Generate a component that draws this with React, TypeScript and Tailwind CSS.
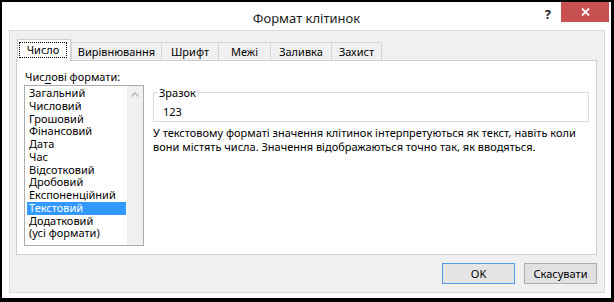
import React from "react";

const items = [
  "Загальний",
  "Числовий",
  "Грошовий",
  "Фінансовий",
  "Дата",
  "Час",
  "Відсотковий",
  "Дробовий",
  "Експоненційний",
  "Текстовий",
  "Додатковий",
  "(усі формати)",
];

const tabs = [
  { label: "Вирівнювання", w: "w-[91px]" },
  { label: "Шрифт", w: "w-[58px]" },
  { label: "Межі", w: "w-[53px]" },
  { label: "Заливка", w: "w-[62px]" },
  { label: "Захист", w: "w-[51px]" },
];

export default function App() {
  return (
    <div className="w-[614px] h-[302px] bg-black pt-[2px] pl-[2px] pr-[3px] pb-[4px] text-[11px] text-black font-['Noto_Sans',sans-serif]">
      <div className="h-full bg-white flex flex-col">
        {/* Title bar */}
        <div className="h-[28px] grid grid-cols-[1fr_auto_1fr] items-start shrink-0">
          <div />
          <div className="pt-[6px] text-[13px] leading-[20px] text-[#1a1a1a]">Формат клітинок</div>
          <div className="flex justify-end items-start">
            <div className="mt-[4px] mr-[10px] text-[13px] font-bold leading-[16px] text-[#222]">?</div>
            <div className="w-[48px] h-[20px] bg-[#c75050] flex items-center justify-center mr-[2px]">
              <svg width="9" height="8" viewBox="0 0 9 8">
                <path d="M1 0.5 L8 7.5 M8 0.5 L1 7.5" stroke="white" strokeWidth="1.8" />
              </svg>
            </div>
          </div>
        </div>

        {/* Client area */}
        <div className="flex-1 ml-[7px] mr-[6px] mb-[5px] border border-[#dadada] bg-[#f0f0f0] pt-[8px] pl-[6px] pr-[7px] flex flex-col">
          {/* Tabs */}
          <div className="flex items-end h-[21px] relative z-10">
            <div className="ml-[1px] w-[54px] h-[22px] -mb-px bg-white border border-b-0 border-[#cfcfcf] pt-[2px] pl-[1px] relative z-10">
              <span className="block w-[48px] h-[16px] border border-dotted border-black leading-[14px] text-center">
                Число
              </span>
            </div>
            {tabs.map((t, i) => (
              <div
                key={t.label}
                className={`${t.w} h-[18px] ${i === 0 ? "ml-0" : "-ml-px"} bg-[#f0f0f0] border border-b-0 border-[#d5d5d5] flex items-center justify-center leading-[15px]`}
              >
                {t.label}
              </div>
            ))}
          </div>

          {/* Panel */}
          <div className="h-[195px] bg-white border border-[#cfcfcf] flex shrink-0">
            {/* Left column */}
            <div className="pl-[7px] pt-[8px] flex flex-col shrink-0">
              <div className="leading-[15px] pl-[1px]">
                Чис<span className="underline underline-offset-2">л</span>ові формати:
              </div>
              <div className="mt-[1px] w-[120px] h-[161px] border border-[#acacac] flex">
                <div className="flex-1 pt-[1px] pl-[2px] pr-[1px]">
                  {items.map((it) => (
                    <div
                      key={it}
                      className={`h-[12.75px] leading-[12.75px] pl-[2px] whitespace-nowrap ${
                        it === "Текстовий" ? "bg-[#3399ff] text-white" : ""
                      }`}
                    >
                      {it}
                    </div>
                  ))}
                </div>
                <div className="w-[16px] bg-[#f0f0f0] flex justify-center pt-[6px]">
                  <svg width="8" height="5" viewBox="0 0 8 5">
                    <path d="M0.5 4.5 L4 1 L7.5 4.5" stroke="#b5b5b5" strokeWidth="1.3" fill="none" />
                  </svg>
                </div>
              </div>
            </div>

            {/* Right column */}
            <div className="ml-[9px] mr-[7px] flex-1 min-w-0 pt-[24px]">
              <fieldset className="border border-[#dcdcdc]">
                <legend className="ml-[4px] px-[1px] leading-[15px]">Зразок</legend>
                <div className="pl-[9px] pt-[4px] pb-[2px] leading-[15px]">123</div>
              </fieldset>
              <div className="mt-[4px] leading-[14px] whitespace-nowrap">
                У текстовому форматі значення клітинок інтерпретуються як текст, навіть коли
                <br />
                вони містять числа. Значення відображаються точно так, як вводяться.
              </div>
            </div>
          </div>

          {/* Buttons */}
          <div className="mt-[8px] flex justify-end gap-[9px]">
            <button className="w-[73px] h-[21px] border border-[#4f9be8] bg-[#e5e5e5] leading-[15px]">OK</button>
            <button className="w-[73px] h-[21px] border border-[#adadad] bg-[#e1e1e1] leading-[15px]">Скасувати</button>
          </div>
        </div>
      </div>
    </div>
  );
}
